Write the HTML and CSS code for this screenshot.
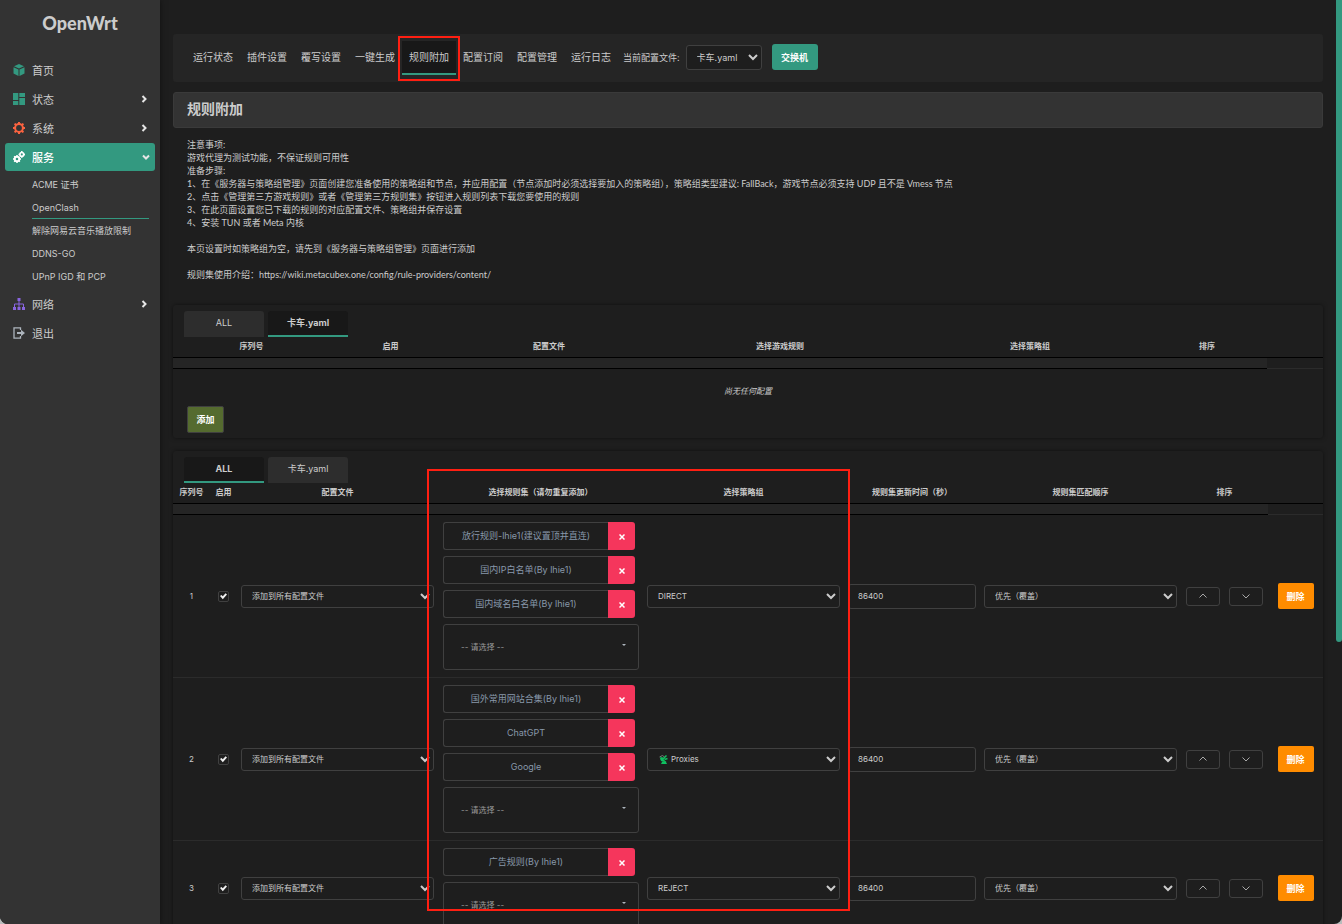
FILE: index.html
```html
<!DOCTYPE html>
<html lang="zh-CN">
<head>
    <meta charset="UTF-8">
    <meta name="viewport" content="width=device-width, initial-scale=1.0">
    <title>OpenWrt - 规则附加</title>
    <link rel="stylesheet" href="styles.css">
</head>
<body>
    <!-- shared icons -->
    <svg class="sprite" aria-hidden="true">
        <symbol id="chev" viewBox="0 0 8 8"><path d="M2.500 1l3 3-3 3" fill="none" stroke="currentColor" stroke-width="2"/></symbol>
        <symbol id="up" viewBox="0 0 8 8"><path d="M.5 5.500L4 2l3.500 3.500" fill="none" stroke="currentColor" stroke-width=".8"/></symbol>
        <symbol id="down" viewBox="0 0 8 8"><path d="M.5 2.500L4 6l3.500-3.500" fill="none" stroke="currentColor" stroke-width=".8"/></symbol>
        <symbol id="times" viewBox="0 0 6 6"><path d="M.5.5l5 5M5.500.5l-5 5" fill="none" stroke="currentColor" stroke-width="1.500"/></symbol>
    </svg>

    <aside class="sidebar">
        <a class="brand" href="#">OpenWrt</a>
        <nav class="menu">
            <a class="menu-item" href="#">
                <svg class="icon teal" viewBox="0 0 12 12"><path d="M6 0l5 2.200L6 4.600 1 2.200zM.5 3.200l5 2.300V12l-5-2.500zM11.500 3.200l-5 2.300V12l5-2.500z" fill="currentColor"/></svg>
                <span>首页</span>
            </a>
            <a class="menu-item" href="#">
                <svg class="icon teal" viewBox="0 0 12 12"><path d="M0 0h5.300v7H0zM6.300 0H12v4H6.300zM0 8h5.300v4H0zM6.300 5H12v7H6.300z" fill="currentColor"/></svg>
                <span>状态</span>
                <svg class="arrow"><use href="#chev"/></svg>
            </a>
            <a class="menu-item" href="#">
                <svg class="icon orange" viewBox="0 0 12 12"><circle cx="6" cy="6" r="3.900" fill="none" stroke="currentColor" stroke-width="2"/><path d="M6 0v2M6 10v2M0 6h2M10 6h2M1.600 1.600l1.400 1.400M9 9l1.400 1.400M1.600 10.400L3 9M9 3l1.400-1.400" stroke="currentColor" stroke-width="2"/></svg>
                <span>系统</span>
                <svg class="arrow"><use href="#chev"/></svg>
            </a>
            <a class="menu-item active" href="#">
                <svg class="icon" viewBox="0 0 12 12"><g fill="none" stroke="currentColor"><circle cx="4" cy="8" r="2.300" stroke-width="2"/><circle cx="8.800" cy="3.400" r="1.900" stroke-width="1.700"/><path stroke-width="1.500" d="M4 4v1M4 11v1M0 8h1M7 8h1M1.200 5.200l.8.8M6 10l.8.8M1.200 10.800L2 10M8.800 0v1M8.800 5.800v1M5.500 3.400h1M11 3.400h1"/></g></svg>
                <span>服务</span>
                <svg class="arrow open"><use href="#chev"/></svg>
            </a>
            <div class="submenu">
                <a href="#">ACME 证书</a>
                <a href="#" class="current">OpenClash</a>
                <a href="#">解除网易云音乐播放限制</a>
                <a href="#">DDNS-GO</a>
                <a href="#">UPnP IGD 和 PCP</a>
            </div>
            <a class="menu-item" href="#">
                <svg class="icon purple" viewBox="0 0 12 12"><path d="M4.500 0h3v3h-3zM0 9h3v3H0zM4.500 9h3v3h-3zM9 9h3v3H9z" fill="currentColor"/><path d="M6 3v6M1.500 9V6h9v3" fill="none" stroke="currentColor"/></svg>
                <span>网络</span>
                <svg class="arrow"><use href="#chev"/></svg>
            </a>
            <a class="menu-item" href="#">
                <svg class="icon grey" viewBox="0 0 12 12"><path d="M7.500 3V.8H1v10.400h6.500V9" fill="none" stroke="currentColor" stroke-width="1.300"/><path d="M4 5h4V2.800L12 6 8 9.200V7H4z" fill="currentColor"/></svg>
                <span>退出</span>
            </a>
        </nav>
    </aside>

    <main class="content">
        <div class="top-tabs">
            <a href="#">运行状态</a>
            <a href="#">插件设置</a>
            <a href="#">覆写设置</a>
            <a href="#">一键生成</a>
            <a href="#" class="active">规则附加</a>
            <a href="#">配置订阅</a>
            <a href="#">配置管理</a>
            <a href="#">运行日志</a>
            <div class="switcher">
                <label for="config">当前配置文件:</label>
                <select id="config"><option>卡车.yaml</option></select>
                <button class="switch-btn">交换机</button>
            </div>
        </div>

        <h2 class="title">规则附加</h2>

        <p class="notes">
            注意事项:<br>
            游戏代理为测试功能，不保证规则可用性<br>
            准备步骤:<br>
            1、在《服务器与策略组管理》页面创建您准备使用的策略组和节点，并应用配置（节点添加时必须选择要加入的策略组），策略组类型建议: FallBack，游戏节点必须支持 UDP 且不是 Vmess 节点<br>
            2、点击《管理第三方游戏规则》或者《管理第三方规则集》按钮进入规则列表下载您要使用的规则<br>
            3、在此页面设置您已下载的规则的对应配置文件、策略组并保存设置<br>
            4、安装 TUN 或者 Meta 内核<br>
            <br>
            本页设置时如策略组为空，请先到《服务器与策略组管理》页面进行添加<br>
            <br>
            规则集使用介绍：<a href="#">https://wiki.metacubex.one/config/rule-providers/content/</a>
        </p>

        <section class="panel">
            <div class="tabs">
                <button>ALL</button>
                <button class="active">卡车.yaml</button>
            </div>
            <table class="games">
                <colgroup><col class="g-num"><col class="g-on"><col class="g-file"><col class="g-rule"><col class="g-group"><col class="g-sort"><col class="g-end"></colgroup>
                <thead>
                    <tr><th>序列号</th><th>启用</th><th>配置文件</th><th>选择游戏规则</th><th>选择策略组</th><th>排序</th><th></th></tr>
                    <tr class="band"><td colspan="6"></td><td></td></tr>
                </thead>
                <tbody>
                    <tr><td colspan="7" class="empty">尚无任何配置</td></tr>
                </tbody>
            </table>
            <button class="add-btn">添加</button>
        </section>

        <section class="panel">
            <div class="tabs">
                <button class="active">ALL</button>
                <button>卡车.yaml</button>
            </div>
            <table class="rules">
                <colgroup><col class="r-num"><col class="r-on"><col class="r-select"><col class="r-set"><col class="r-select"><col class="r-time"><col class="r-select"><col class="r-sort"><col class="r-end"></colgroup>
                <thead>
                    <tr><th>序列号</th><th>启用</th><th>配置文件</th><th>选择规则集（请勿重复添加）</th><th>选择策略组</th><th>规则集更新时间（秒）</th><th>规则集匹配顺序</th><th>排序</th><th></th></tr>
                    <tr class="band"><td colspan="8"></td><td></td></tr>
                </thead>
                <tbody>
                    <tr>
                        <td>1</td>
                        <td><input type="checkbox" aria-label="启用 1" checked></td>
                        <td><select aria-label="配置文件 1"><option>添加到所有配置文件</option></select></td>
                        <td>
                            <div class="set-list">
                                <div class="tag"><span>放行规则-lhie1(建议置顶并直连)</span><button aria-label="移除"><svg><use href="#times"/></svg></button></div>
                                <div class="tag"><span>国内IP白名单(By lhie1)</span><button aria-label="移除"><svg><use href="#times"/></svg></button></div>
                                <div class="tag"><span>国内域名白名单(By lhie1)</span><button aria-label="移除"><svg><use href="#times"/></svg></button></div>
                                <div class="picker"><select aria-label="规则集 1"><option>-- 请选择 --</option></select></div>
                            </div>
                        </td>
                        <td><select aria-label="策略组 1"><option>DIRECT</option></select></td>
                        <td><input type="text" aria-label="更新时间 1" value="86400"></td>
                        <td><select aria-label="匹配顺序 1"><option>优先（覆盖）</option></select></td>
                        <td><div class="move"><button aria-label="上移"><svg><use href="#up"/></svg></button><button aria-label="下移"><svg><use href="#down"/></svg></button></div></td>
                        <td><button class="delete-btn">删除</button></td>
                    </tr>
                    <tr>
                        <td>2</td>
                        <td><input type="checkbox" aria-label="启用 2" checked></td>
                        <td><select aria-label="配置文件 2"><option>添加到所有配置文件</option></select></td>
                        <td>
                            <div class="set-list">
                                <div class="tag"><span>国外常用网站合集(By lhie1)</span><button aria-label="移除"><svg><use href="#times"/></svg></button></div>
                                <div class="tag"><span>ChatGPT</span><button aria-label="移除"><svg><use href="#times"/></svg></button></div>
                                <div class="tag"><span>Google</span><button aria-label="移除"><svg><use href="#times"/></svg></button></div>
                                <div class="picker"><select aria-label="规则集 2"><option>-- 请选择 --</option></select></div>
                            </div>
                        </td>
                        <td>
                            <div class="with-icon">
                                <select aria-label="策略组 2"><option>Proxies</option></select>
                                <svg viewBox="0 0 9 9"><path d="M1 2.500C1 6 3 7.500 7.500 7 6 5.500 4 4.500 3.500 2z" fill="#0fbf60"/><path d="M3 7h4l1 2H2z" fill="#0fbf60"/><path d="M4 4l3.500-3.500M5.500 4.500L8.500 3.500" stroke="#0fbf60" stroke-width="1.500"/><path d="M.5 2l3-1.500 2 1.500" fill="none" stroke="#777"/></svg>
                            </div>
                        </td>
                        <td><input type="text" aria-label="更新时间 2" value="86400"></td>
                        <td><select aria-label="匹配顺序 2"><option>优先（覆盖）</option></select></td>
                        <td><div class="move"><button aria-label="上移"><svg><use href="#up"/></svg></button><button aria-label="下移"><svg><use href="#down"/></svg></button></div></td>
                        <td><button class="delete-btn">删除</button></td>
                    </tr>
                    <tr>
                        <td>3</td>
                        <td><input type="checkbox" aria-label="启用 3" checked></td>
                        <td><select aria-label="配置文件 3"><option>添加到所有配置文件</option></select></td>
                        <td>
                            <div class="set-list">
                                <div class="tag"><span>广告规则(By lhie1)</span><button aria-label="移除"><svg><use href="#times"/></svg></button></div>
                                <div class="picker"><select aria-label="规则集 3"><option>-- 请选择 --</option></select></div>
                            </div>
                        </td>
                        <td><select aria-label="策略组 3"><option>REJECT</option></select></td>
                        <td><input type="text" aria-label="更新时间 3" value="86400"></td>
                        <td><select aria-label="匹配顺序 3"><option>优先（覆盖）</option></select></td>
                        <td><div class="move"><button aria-label="上移"><svg><use href="#up"/></svg></button><button aria-label="下移"><svg><use href="#down"/></svg></button></div></td>
                        <td><button class="delete-btn">删除</button></td>
                    </tr>
                </tbody>
            </table>
            <div class="mark"></div>
        </section>
        <div class="scroll-thumb"></div>
    </main>
</body>
</html>
```
FILE: styles.css
```css
:root {
    --bg: #1e1e1e;
    --panel: #252525;
    --side: #333333;
    --teal: #339980;
    --text: #cccccc;
    --border: #404040;
    --mark: #ff1f12;
}

* {
    margin: 0;
    padding: 0;
    box-sizing: border-box;
}

html {
    background: #b8bcbc;
}

body {
    display: flex;
    height: 100vh;
    overflow: hidden;
    border-radius: 0 0 8px 8px;
    font-family: Inter, "Noto Sans CJK SC", sans-serif;
    font-size: 9px;
    background: var(--bg);
    color: var(--text);
}

a {
    color: inherit;
    text-decoration: none;
}

button, select, input {
    font-family: inherit;
    font-size: 9px;
    color: inherit;
}

button {
    border: none;
    cursor: pointer;
}

.sprite {
    display: none;
}

/* sidebar */
.sidebar {
    flex: 0 0 160px;
    background: var(--side);
    box-shadow: 0 0 6px rgba(0, 0, 0, 0.5);
}

.brand {
    display: block;
    height: 56px;
    line-height: 46px;
    text-align: center;
    font-family: Lato, sans-serif;
    font-size: 18px;
    font-weight: 900;
}

.menu {
    display: flex;
    flex-direction: column;
    gap: 1px;
    padding: 0 5px;
}

.menu-item {
    display: flex;
    align-items: center;
    height: 28px;
    padding: 0 7px 0 8px;
    border-radius: 3px;
    font-size: 11px;
}

.menu-item.active {
    padding-right: 5px;
    background: var(--teal);
    color: white;
    font-weight: 500;
}

.icon {
    width: 12px;
    height: 12px;
    margin-right: 7px;
}

.teal { color: var(--teal); }
.orange { color: #fb6340; }
.purple { color: #8965e0; }
.grey { color: #adb5bd; }

.arrow {
    width: 8px;
    height: 8px;
    margin-left: auto;
    color: #e6e6e6;
}

.arrow.open {
    transform: rotate(90deg);
}

.submenu {
    display: flex;
    flex-direction: column;
    padding: 1px 6px 1px 27px;
}

.submenu a {
    height: 23px;
    line-height: 23px;
    white-space: nowrap;
}

.submenu .current {
    border-bottom: 1px solid var(--teal);
}

/* content */
.content {
    flex: 1;
    min-width: 0;
    position: relative;
    padding: 34px 19px 0 13px;
    overflow: hidden;
}

.top-tabs {
    display: flex;
    align-items: center;
    height: 48px;
    padding-left: 13px;
    border-radius: 3px;
    background: var(--panel);
    font-size: 10px;
    white-space: nowrap;
}

.top-tabs a {
    height: 34px;
    line-height: 32px;
    padding: 0 7px;
    border-bottom: 2px solid transparent;
}

.top-tabs .active {
    position: relative;
    background: #181818;
    border-color: var(--teal);
}

.top-tabs .active::after {
    content: "";
    position: absolute;
    inset: -5px -4px -8px;
    border: 2px solid var(--mark);
}

.switcher {
    display: flex;
    align-items: center;
    padding: 0 0 2px 5px;
    font-size: 9px;
}

.switcher select {
    width: 76px;
    height: 25px;
    margin-left: 6px;
}

.switch-btn {
    width: 46px;
    height: 26px;
    margin-left: 10px;
    border-radius: 3px;
    background: var(--teal);
    color: white;
    font-weight: bold;
}

.title {
    height: 36px;
    line-height: 32px;
    margin-top: 10px;
    padding-left: 13px;
    border: 1px solid #3a3a3a;
    border-radius: 3px;
    background: var(--side);
    font-size: 14px;
}

.notes {
    margin: 10px 14px 24px;
    font-family: Lato, "Noto Sans CJK SC", sans-serif;
    line-height: 13px;
}

.panel {
    position: relative;
    margin-bottom: 13px;
    padding-top: 6px;
    border-radius: 3px;
    box-shadow: 0 0 4px rgba(0, 0, 0, 0.5);
}

.tabs {
    display: flex;
    gap: 4px;
    padding-left: 11px;
}

.tabs button {
    width: 80px;
    height: 26px;
    padding-bottom: 2px;
    border-bottom: 2px solid transparent;
    border-radius: 3px 3px 0 0;
    background: #2d2d2d;
}

.tabs .active {
    background: #181818;
    border-color: var(--teal);
    font-weight: bold;
}

/* tables */
table {
    width: 100%;
    table-layout: fixed;
    border-collapse: separate;
    border-spacing: 0;
    font-size: 8px;
    text-align: center;
}

th {
    height: 21px;
    padding-bottom: 3px;
    border-bottom: 1px solid black;
    white-space: nowrap;
}

td {
    padding: 0 4px;
    border-bottom: 1px solid #2b2b2b;
}

.band td {
    height: 11px;
}

.band td:first-child {
    background: var(--panel);
    border-color: black;
}

.g-num { width: 157px; }
.g-on { width: 121px; }
.g-file { width: 196px; }
.g-rule { width: 266px; }
.g-group { width: 234px; }
.g-sort { width: 120px; }
.g-end { width: 56px; }

.r-num { width: 37px; }
.r-on { width: 27px; }
.r-select { width: 201px; }
.r-set { width: 205px; }
.r-time { width: 136px; }
.r-sort { width: 87px; }
.r-end { width: 55px; }

.empty {
    height: 37px;
    padding-top: 6px;
    border: none;
    font-style: italic;
}

.add-btn {
    width: 37px;
    height: 27px;
    margin: 0 0 5px 14px;
    border: 1px solid var(--border);
    border-radius: 2px;
    background: #556b2f;
    color: white;
    font-weight: bold;
}

select, input[type="text"] {
    border: 1px solid var(--border);
    border-radius: 3px;
    background: var(--bg);
}

select {
    padding: 0 0 0 6px;
}

table select, table input[type="text"] {
    display: block;
    width: 100%;
    height: 23px;
    font-size: 8px;
}

table input[type="text"] {
    height: 25px;
    padding-left: 9px;
}

input[type="checkbox"] {
    appearance: none;
    display: grid;
    place-items: center;
    width: 11px;
    height: 11px;
    margin: auto;
    border: 1px solid var(--border);
    border-radius: 2px;
}

input[type="checkbox"]:checked::after {
    content: "";
    width: 7px;
    height: 7px;
    background: #f0f0f0;
    clip-path: polygon(0 50%, 20% 35%, 40% 55%, 80% 10%, 100% 30%, 40% 95%);
}

.set-list {
    display: flex;
    flex-direction: column;
    gap: 6px;
    padding: 7px 0 7px 1px;
}

.tag {
    display: flex;
    height: 28px;
    margin-right: 4px;
}

.tag span {
    flex: 1;
    line-height: 26px;
    border: 1px solid var(--border);
    border-right: none;
    border-radius: 3px 0 0 3px;
    color: #8898aa;
    font-size: 9px;
}

.tag button {
    width: 27px;
    border-radius: 0 3px 3px 0;
    background: #f5365c;
    color: white;
}

.tag svg {
    width: 6px;
    height: 6px;
}

.picker {
    position: relative;
}

.picker select {
    appearance: none;
    height: 46px;
    padding-left: 17px;
    color: #999999;
}

.picker::after {
    content: "";
    position: absolute;
    top: 20px;
    right: 13px;
    border: 2px solid transparent;
    border-top-color: #adb5bd;
    border-bottom: none;
}

.with-icon {
    position: relative;
}

.with-icon select {
    padding-left: 19px;
}

.with-icon svg {
    position: absolute;
    top: 7px;
    left: 12px;
    width: 9px;
    height: 9px;
}

.move {
    display: flex;
    justify-content: center;
    gap: 9px;
}

.move button {
    width: 34px;
    height: 19px;
    border: 1px solid var(--border);
    border-radius: 3px;
    background: var(--bg);
}

.move svg {
    display: block;
    width: 8px;
    height: 8px;
    margin: auto;
}

.delete-btn {
    width: 36px;
    height: 26px;
    border-radius: 2px;
    background: #ff8c00;
    color: white;
    font-weight: bold;
}

.mark {
    position: absolute;
    top: 18px;
    left: 254px;
    width: 423px;
    height: 442px;
    border: 2px solid var(--mark);
}

.scroll-thumb {
    position: absolute;
    top: 0;
    right: 0;
    width: 6px;
    height: 642px;
    border-radius: 0 0 3px 3px;
    background: var(--teal);
}
```
